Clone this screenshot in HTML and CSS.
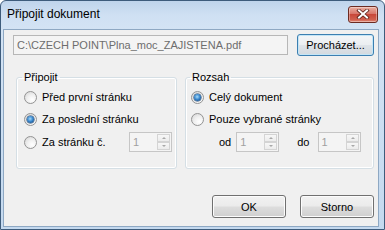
FILE: index.html
```html
<!DOCTYPE html>
<html lang="cs">
<head>
<meta charset="utf-8">
<title>Připojit dokument</title>
<link rel="stylesheet" href="styles.css">
</head>
<body>
<div class="window">
  <div class="titlebar">
    <span class="title">Připojit dokument</span>
    <div class="close">
      <svg width="14" height="10" viewBox="0 0 14 10">
        <path d="M3 1.5 L11 8.5 M11 1.5 L3 8.5" stroke="#5a2018" stroke-width="3.6" stroke-linecap="square" fill="none"/>
        <path d="M3 1.5 L11 8.5 M11 1.5 L3 8.5" stroke="#ffffff" stroke-width="2" stroke-linecap="square" fill="none"/>
      </svg>
    </div>
  </div>
  <div class="client">
    <div class="file-row">
      <div class="textbox path">C:\CZECH POINT\Plna_moc_ZAJISTENA.pdf</div>
      <div class="btn default browse">Procházet...</div>
    </div>
    <div class="groups">
      <fieldset class="group group-left">
        <legend>Připojit</legend>
        <div class="rows">
          <div class="row"><span class="radio"></span><span>Před první stránku</span></div>
          <div class="row"><span class="radio checked"></span><span>Za poslední stránku</span></div>
          <div class="row row-spin"><span class="radio"></span><span>Za stránku č.</span>
            <div class="spin push"><span class="spin-val">1</span><span class="spin-btns"><span class="up"></span><span class="down"></span></span></div>
          </div>
        </div>
      </fieldset>
      <fieldset class="group group-right">
        <legend>Rozsah</legend>
        <div class="rows">
          <div class="row"><span class="radio checked"></span><span>Celý dokument</span></div>
          <div class="row"><span class="radio"></span><span>Pouze vybrané stránky</span></div>
          <div class="row row-spin range">
            <span class="lbl-od">od</span>
            <div class="spin"><span class="spin-val">1</span><span class="spin-btns"><span class="up"></span><span class="down"></span></span></div>
            <span class="lbl-do">do</span>
            <div class="spin"><span class="spin-val">1</span><span class="spin-btns"><span class="up"></span><span class="down"></span></span></div>
          </div>
        </div>
      </fieldset>
    </div>
    <div class="actions">
      <div class="btn">OK</div>
      <div class="btn">Storno</div>
    </div>
  </div>
</div>
</body>
</html>
```
FILE: styles.css
```css
* { box-sizing: border-box; }
html, body { margin: 0; padding: 0; }
body {
  width: 385px;
  height: 230px;
  overflow: hidden;
  background: #ffffff;
  font-family: "Liberation Sans", Arial, sans-serif;
  font-size: 11px;
  color: #000;
}
.window {
  width: 385px;
  height: 230px;
  display: flex;
  flex-direction: column;
  border: 1px solid #3e5c7c;
  border-radius: 6px 6px 0 0;
  background: linear-gradient(#bfd4ec, #cfe0f3 14px, #d3e3f4 28px, #c4d9ef);
}
.titlebar {
  height: 28px;
  display: flex;
  align-items: center;
  justify-content: space-between;
  padding: 0 6px 2px 6px;
}
.title { font-size: 12px; color: #000; }
.close {
  width: 30px;
  height: 17px;
  border: 1px solid #6c2b22;
  border-radius: 3px;
  background: linear-gradient(#eab0a2, #d8766a 45%, #c8483a 50%, #d0604f 85%, #e4917f);
  box-shadow: inset 0 0 0 1px rgba(255,255,255,0.35);
  display: flex;
  align-items: center;
  justify-content: center;
}
.close svg { display: block; }
.client {
  flex: 1;
  margin: 0 5px 2px 2px;
  background: #f0f0f0;
  border: 1px solid #8ea8c3;
  padding: 4px 4px 0 9px;
  display: flex;
  flex-direction: column;
}
.file-row {
  height: 22px;
  display: flex;
  align-items: center;
  gap: 9px;
}
.textbox {
  width: 275px;
  height: 20px;
  border: 1px solid #b7b7b7;
  background: #f4f4f4;
  color: #6d6d6d;
  padding: 0 3px;
  line-height: 18px;
  white-space: nowrap;
  overflow: hidden;
}
.btn {
  height: 23px;
  width: 74px;
  border: 1px solid #707070;
  border-radius: 3px;
  background: linear-gradient(#f2f2f2, #ebebeb 48%, #dddddd 52%, #cfcfcf);
  box-shadow: inset 0 0 0 1px #fcfcfc;
  display: flex;
  align-items: center;
  justify-content: center;
  color: #000;
}
.btn.browse { width: 77px; height: 22px; }
.btn.default {
  border-color: #3c7fb1;
  box-shadow: inset 0 0 0 1px #c4e5f6;
  background: linear-gradient(#f4f6f8, #ebeef1 48%, #dee3e8 52%, #d3d9df);
}
.groups {
  display: flex;
  gap: 8px;
  margin: 15px 0 0 3px;
}
.group {
  margin: 0;
  padding: 0;
  height: 98px;
  border: 1px solid #d5dfe5;
  border-radius: 3px;
  box-shadow: inset 0 0 0 1px #ffffff;
  min-width: 0;
}
.group-left { width: 161px; }
.group-right { width: 189px; }
legend {
  padding: 0 2px;
  margin-left: 5px;
  line-height: 13px;
}
.group-right legend { margin-left: 4px; }
.rows {
  padding-top: 2px;
  display: flex;
  flex-direction: column;
}
.group-left .rows { padding-left: 7px; padding-right: 4px; }
.group-right .rows { padding-left: 5px; padding-right: 4px; }
.row {
  height: 22px;
  display: flex;
  align-items: center;
  gap: 5px;
  white-space: nowrap;
}
.row-spin { margin-top: 1px; }
.radio {
  width: 13px;
  height: 13px;
  flex: none;
  border-radius: 50%;
  border: 1px solid #939393;
  background: radial-gradient(circle at 65% 70%, #ffffff, #f0f0f0 45%, #d2d2d2);
  display: flex;
  align-items: center;
  justify-content: center;
}
.radio.checked::after {
  content: "";
  width: 7px;
  height: 7px;
  border-radius: 50%;
  background: radial-gradient(circle at 45% 40%, #a9dcf8, #3c8ad0 45%, #0c3f78 90%);
  box-shadow: 0 0 0 0.5px #1a3f66;
}
.push { margin-left: auto; }
.spin {
  width: 43px;
  height: 20px;
  flex: none;
  border: 1px solid #c6c6c6;
  background: #f4f4f4;
  display: flex;
  justify-content: space-between;
}
.spin-val {
  color: #a0a0a0;
  padding-left: 3px;
  line-height: 18px;
}
.spin-btns {
  width: 15px;
  display: flex;
  flex-direction: column;
  padding: 1px;
}
.spin-btns span {
  flex: 1;
  border: 1px solid #d4d4d4;
  background: linear-gradient(#f7f7f7, #ececec);
  position: relative;
}
.spin-btns .up::after,
.spin-btns .down::after {
  content: "";
  position: absolute;
  left: 4px;
  top: 2px;
  border-left: 2px solid transparent;
  border-right: 2px solid transparent;
}
.spin-btns .up::after { border-bottom: 2px solid #a8a8a8; }
.spin-btns .down::after { border-top: 2px solid #a8a8a8; }
.range { gap: 0; }
.lbl-od { margin-left: 28px; margin-right: 5px; }
.lbl-do { margin-left: 18px; margin-right: 8px; }
.actions {
  display: flex;
  justify-content: flex-end;
  gap: 14px;
  margin-top: 26px;
}
```
